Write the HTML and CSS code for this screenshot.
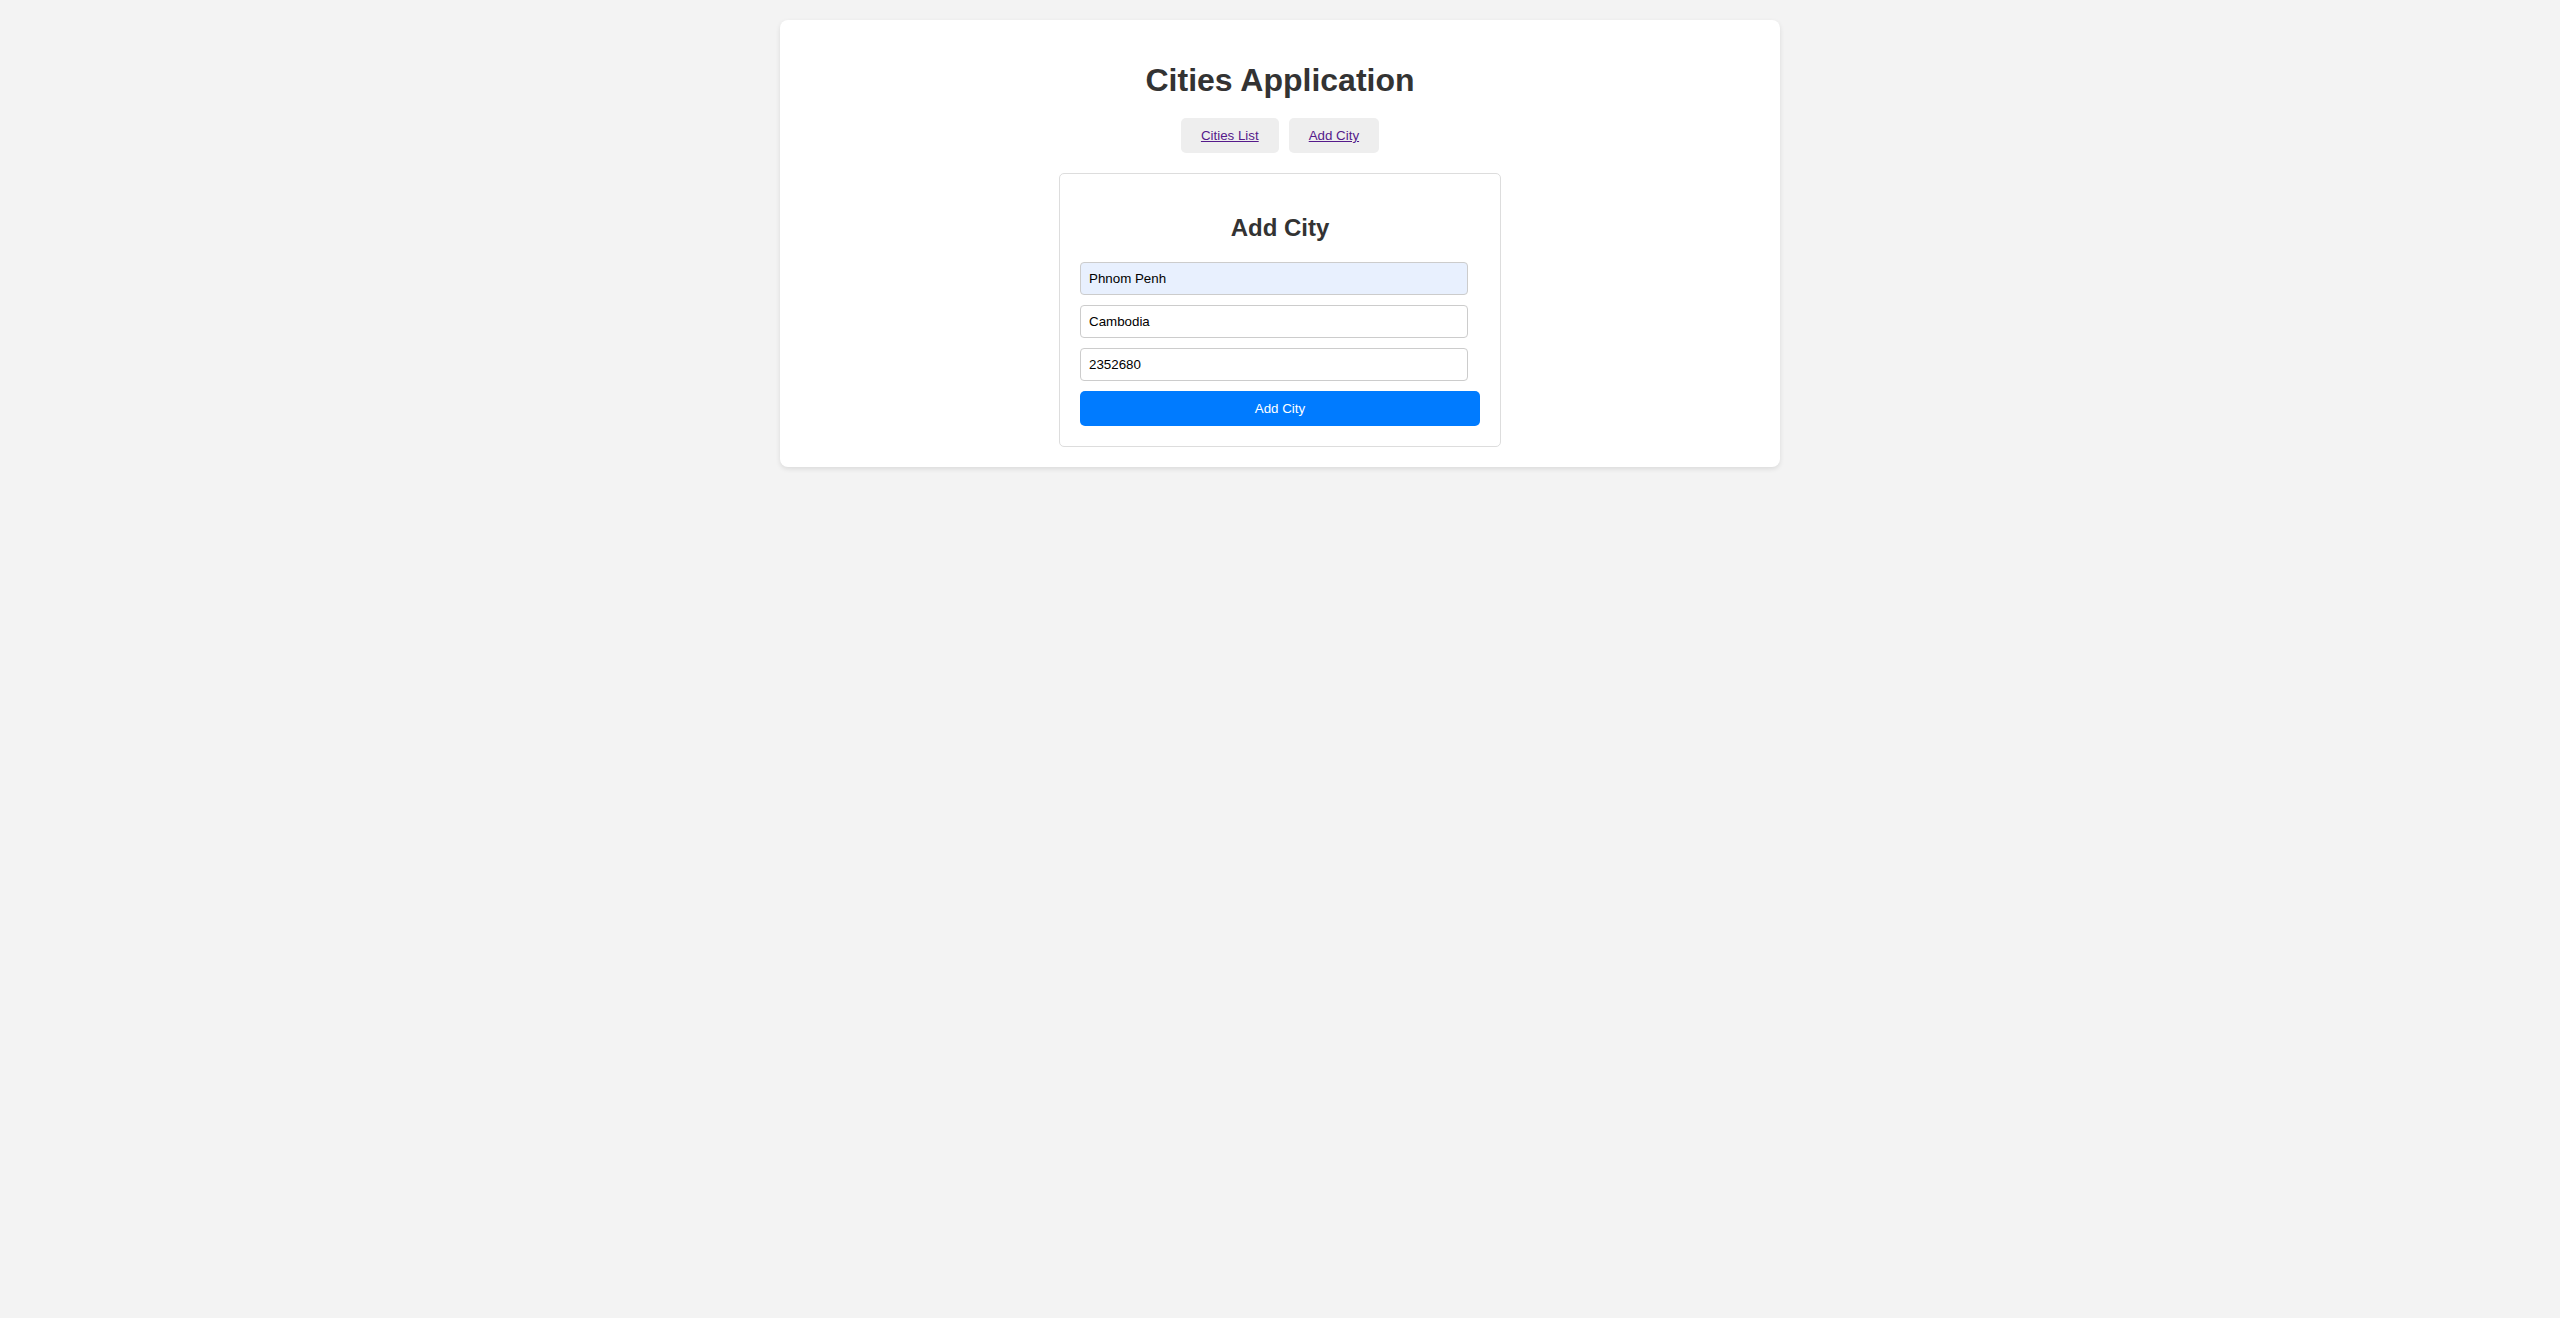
FILE: index.html
```html
<!DOCTYPE html>
<html lang="en">
<head>
<meta charset="utf-8">
<title>Cities Application</title>
<link rel="stylesheet" href="styles.css">
</head>
<body>
<div class="container">
  <h1 class="title">Cities Application</h1>
  <nav class="nav">
    <a class="nav-link" href="#list">Cities List</a>
    <a class="nav-link" href="#add">Add City</a>
  </nav>
  <div class="card">
    <h2 class="card-title">Add City</h2>
    <form class="form">
      <input class="field autofilled" type="text" value="Phnom Penh">
      <input class="field" type="text" value="Cambodia">
      <input class="field" type="text" value="2352680">
      <button class="submit" type="button">Add City</button>
    </form>
  </div>
</div>
</body>
</html>
```
FILE: styles.css
```css
body {
  margin: 0;
  background: #f3f3f3;
  font-family: "Liberation Sans", Arial, Helvetica, sans-serif;
  color: #333;
}
.container {
  width: 1000px;
  box-sizing: border-box;
  margin: 20px auto;
  padding: 20px;
  background: #fff;
  border-radius: 8px;
  box-shadow: 0 2px 5px rgba(0, 0, 0, 0.1);
  text-align: center;
}
.title {
  font-size: 32px;
  font-weight: bold;
  margin: 22px 0 19px;
  color: #333;
}
.nav {
  display: flex;
  justify-content: center;
  gap: 10px;
  margin-bottom: 20px;
}
.nav-link {
  display: block;
  padding: 10px 20px;
  background: #eee;
  border-radius: 5px;
  font-size: 13.333px;
  line-height: 15px;
  color: #551a8b;
  text-decoration: underline;
}
.card {
  width: 442px;
  box-sizing: border-box;
  margin: 0 auto;
  padding: 20px;
  border: 1px solid #ddd;
  border-radius: 5px;
}
.card-title {
  font-size: 24px;
  font-weight: bold;
  margin: 20px 0 20px;
  color: #333;
}
.form {
  display: flex;
  flex-direction: column;
  gap: 10px;
  text-align: left;
}
.field {
  width: 388px;
  box-sizing: border-box;
  height: 33px;
  padding: 8px;
  border: 1px solid #ccc;
  border-radius: 4px;
  font-family: "Liberation Sans", Arial, sans-serif;
  font-size: 13.333px;
  color: #000;
  background: #fff;
  margin: 0;
}
.field.autofilled {
  background: #e8f0fe;
}
.submit {
  width: 400px;
  height: 35px;
  margin: 0;
  border: none;
  border-radius: 5px;
  background: #007bff;
  color: #fff;
  font-family: "Liberation Sans", Arial, sans-serif;
  font-size: 13.333px;
}
```
